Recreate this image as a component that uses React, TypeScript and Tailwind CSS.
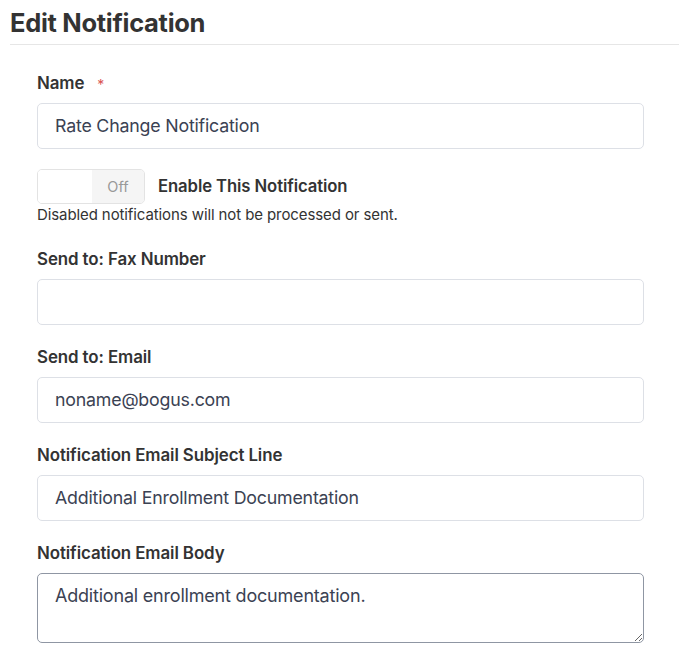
import React from "react";

const font = { fontFamily: "Inter, 'Noto Sans', sans-serif" };

function Field({ label, value, required }: { label: string; value?: string; required?: boolean }) {
  return (
    <div className="flex flex-col">
      <div className="flex items-center h-[20px] text-[16.9px] font-semibold text-[#333333] tracking-[-0.1px]">
        {label}
        {required && <span className="ml-[13px] text-[#d9534f] text-[14px] font-normal">*</span>}
      </div>
      <div className="mt-[9px] h-[46px] w-[607px] rounded-[5px] border border-[#dde0e6] bg-white flex items-center px-[17px] text-[17.8px] text-[#3b4253] tracking-[-0.2px]">
        {value}
      </div>
    </div>
  );
}

export default function App() {
  return (
    <div className="bg-white w-[679px] h-[651px] overflow-hidden" style={font}>
      <div className="pl-[10px] pt-[8px]">
        <h1 className="text-[25.5px] font-bold text-[#333333] leading-[30px] tracking-[-0.3px]">Edit Notification</h1>
        <div className="mt-[6px] h-px bg-[#e6e6e6]" />
      </div>
      <div className="pl-[37px] pt-[29px] flex flex-col">
        <Field label="Name" value="Rate Change Notification" required />
        <div className="mt-[20px] flex items-center">
          <div className="flex h-[35px] w-[108px] rounded-[5px] border border-[#e3e3e3] overflow-hidden">
            <div className="w-[54px] bg-white" />
            <div className="flex-1 bg-[#f5f5f5] flex items-center justify-center text-[14.5px] text-[#999999]">Off</div>
          </div>
          <div className="ml-[13px] text-[16.7px] font-semibold text-[#333333] tracking-[-0.1px]">Enable This Notification</div>
        </div>
        <div className="mt-[1px] text-[15px] text-[#333333] leading-[20px] tracking-[-0.1px]">Disabled notifications will not be processed or sent.</div>
        <div className="mt-[25px] flex flex-col gap-[23px]">
          <Field label="Send to: Fax Number" value="" />
          <Field label="Send to: Email" value="noname@bogus.com" />
          <Field label="Notification Email Subject Line" value="Additional Enrollment Documentation" />
        </div>
        <div className="mt-[23px] flex flex-col">
          <div className="flex items-center h-[20px] text-[16.9px] font-semibold text-[#333333] tracking-[-0.1px]">Notification Email Body</div>
          <textarea
            className="mt-[9px] h-[70px] w-[607px] rounded-[5px] border border-[#8f96a3] bg-white px-[17px] pt-[8px] text-[18px] text-[#3b4253] outline-none tracking-[-0.2px]"
            style={font}
            defaultValue="Additional enrollment documentation."
          />
        </div>
      </div>
    </div>
  );
}
